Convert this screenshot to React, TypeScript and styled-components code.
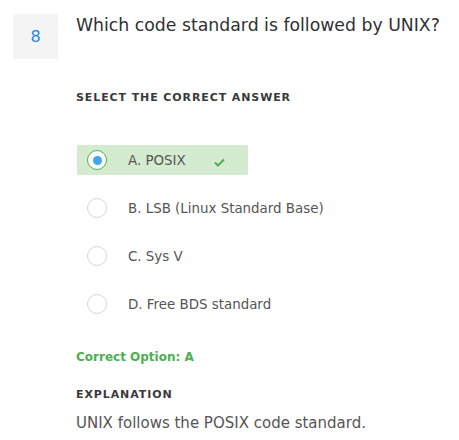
import React from "react";
import styled, { createGlobalStyle } from "styled-components";

const Global = createGlobalStyle`
  html, body { margin: 0; padding: 0; background: #fff; }
  body { font-family: "DejaVu Sans", "Open Sans", sans-serif; color: #333; }
`;

const Page = styled.div`
  width: 459px;
  height: 440px;
  padding: 14px 0 0 13px;
  box-sizing: border-box;
  display: flex;
  gap: 18px;
`;

const NumberBox = styled.div`
  width: 45px;
  height: 45px;
  flex: none;
  background: #f4f4f4;
  color: #1e88e5;
  font-size: 16px;
  display: flex;
  align-items: center;
  justify-content: center;
`;

const Body = styled.div`
  display: flex;
  flex-direction: column;
`;

const Question = styled.div`
  font-size: 17.3px;
  line-height: 22px;
  color: #2f3134;
`;

const SectionLabel = styled.div<{ $top: number }>`
  font-size: 11px;
  font-weight: 600;
  letter-spacing: 0.9px;
  color: #3a3a3a;
  text-transform: uppercase;
  margin-top: ${(p) => p.$top}px;
`;

const Options = styled.div`
  display: flex;
  flex-direction: column;
  gap: 18px;
  margin-top: 41px;
`;

const Option = styled.div<{ $correct?: boolean }>`
  display: flex;
  align-items: center;
  height: 30px;
  width: ${(p) => (p.$correct ? "171px" : "auto")};
  margin-left: 1px;
  padding-left: 10px;
  box-sizing: border-box;
  background: ${(p) => (p.$correct ? "#d5ebd0" : "transparent")};
  font-size: 13.4px;
  color: #555;
`;

const Radio = styled.span<{ $correct?: boolean }>`
  width: 20px;
  height: 20px;
  box-sizing: border-box;
  border-radius: 50%;
  border: 1px solid ${(p) => (p.$correct ? "#4caf50" : "#d6d6d6")};
  background: #fff;
  flex: none;
  display: flex;
  align-items: center;
  justify-content: center;
  margin-right: 21px;
`;

const Dot = styled.span`
  width: 9px;
  height: 9px;
  border-radius: 50%;
  background: #42a5f5;
`;

const Check = styled.svg`
  margin-left: 28px;
  margin-top: 5px;
`;

const Correct = styled.div`
  margin-top: 31px;
  font-size: 12px;
  font-weight: 600;
  color: #4caf50;
`;

const Explanation = styled.div`
  margin-top: 13px;
  font-size: 15px;
  color: #555;
`;

const options = [
  { text: "A. POSIX", correct: true },
  { text: "B. LSB (Linux Standard Base)" },
  { text: "C. Sys V" },
  { text: "D. Free BDS standard" },
];

export default function App() {
  return (
    <>
      <Global />
      <Page>
        <NumberBox>8</NumberBox>
        <Body>
          <Question>Which code standard is followed by UNIX?</Question>
          <SectionLabel $top={55}>Select the correct answer</SectionLabel>
          <Options>
            {options.map((o) => (
              <Option key={o.text} $correct={o.correct}>
                <Radio $correct={o.correct}>{o.correct && <Dot />}</Radio>
                {o.text}
                {o.correct && (
                  <Check width="11" height="9" viewBox="0 0 11 9">
                    <path d="M1 4.5 L4 7.5 L10 1.5" fill="none" stroke="#4caf50" strokeWidth="2" />
                  </Check>
                )}
              </Option>
            ))}
          </Options>
          <Correct>Correct Option: A</Correct>
          <SectionLabel $top={24}>Explanation</SectionLabel>
          <Explanation>UNIX follows the POSIX code standard.</Explanation>
        </Body>
      </Page>
    </>
  );
}
